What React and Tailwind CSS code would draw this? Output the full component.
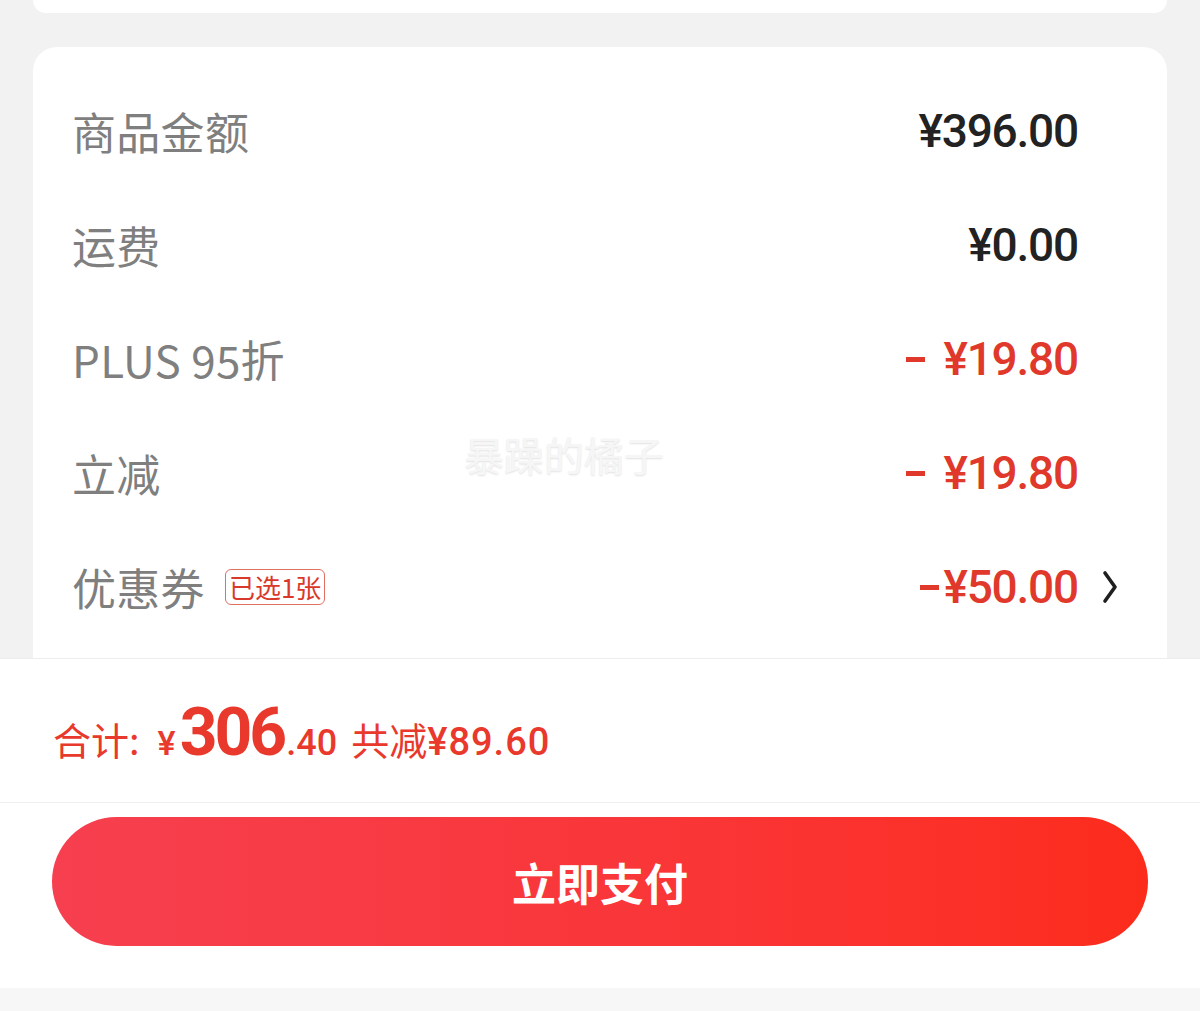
import React from "react";

const CJK = '"Noto Sans CJK SC", "Noto Sans", sans-serif';
const NUM = 'Roboto, "Noto Sans CJK SC", sans-serif';

function Chevron() {
  return (
    <svg width="16" height="34" viewBox="0 0 16 34" fill="none">
      <path d="M3 3 L13 17 L3 31" stroke="#1f1f1f" strokeWidth="3.6" strokeLinecap="round" strokeLinejoin="round" />
    </svg>
  );
}

function Row({ label, badge, value, red, dash, dashGap, chevron }) {
  return (
    <div className="flex h-[114px] items-center">
      <div className="flex items-center">
        <span className="text-[44px] leading-none tracking-[0.3px] text-[#7f7f7f]" style={{ fontFamily: CJK }}>
          {label}
        </span>
        {badge && (
          <span
            className="ml-[20px] flex h-[36px] items-center rounded-[6px] border border-[#e07060] px-[3px] text-[26px] leading-none text-[#d9392b]"
            style={{ fontFamily: CJK }}
          >
            {badge}
          </span>
        )}
      </div>
      <div className="flex-1" />
      <span
        className={`flex items-center text-[46px] font-medium leading-none tracking-[-1.2px] ${red ? "text-[#e0392b]" : "text-[#222222]"}`}
        style={{ fontFamily: NUM }}
      >
        {dash && (
          <span className={`inline-block h-[5px] w-[19px] bg-[#e0392b] ${dashGap ? "mr-[18px]" : "mr-[4px]"}`} />
        )}
        {value}
      </span>
      <div className="flex w-[40px] justify-end">{chevron && <Chevron />}</div>
    </div>
  );
}

export default function App() {
  return (
    <div className="relative flex h-[1011px] w-full flex-col overflow-hidden bg-[#f2f2f2]">
      <div className="mx-[33px] h-[13px] shrink-0 rounded-b-[24px] bg-white" />
      <div className="mx-[33px] mt-[34px] flex-1 rounded-t-[24px] bg-white pl-[39px] pr-[49px] pt-[27px]">
        <Row label="商品金额" value="¥396.00" />
        <Row label="运费" value="¥0.00" />
        <Row label="PLUS 95折" value="¥19.80" red dash dashGap />
        <Row label="立减" value="¥19.80" red dash dashGap />
        <Row label="优惠券" badge="已选1张" value="¥50.00" red dash chevron />
      </div>
      <div className="shrink-0 bg-white">
        <div className="flex h-[144px] items-center border-t border-[#ededed] pl-[53px] pt-[10px]">
          <div className="flex items-baseline text-[#e8392c]" style={{ fontFamily: NUM }}>
            <span className="text-[38px]" style={{ fontFamily: CJK }}>合计:</span>
            <span className="ml-[18px] text-[34px] font-medium">¥</span>
            <span className="ml-[4px] text-[66px] font-bold leading-none tracking-[-3px]">306</span>
            <span className="ml-[2px] text-[36px] font-medium">.40</span>
            <span className="ml-[14px] text-[38px]" style={{ fontFamily: CJK }}>共减</span>
            <span className="text-[38px] font-medium tracking-[1px]">¥89.60</span>
          </div>
        </div>
        <div className="border-t border-[#f0f0f0] px-[52px] pb-[42px] pt-[14px]">
          <div className="flex h-[129px] items-center justify-center rounded-full bg-gradient-to-r from-[#f63f4f] to-[#fc2c1b]">
            <span className="text-[44px] font-bold leading-none text-white" style={{ fontFamily: CJK }}>
              立即支付
            </span>
          </div>
        </div>
      </div>
      <div className="h-[23px] shrink-0 bg-[#f7f7f7]" />
      <div
        className="pointer-events-none absolute left-[464px] top-[434px] text-[40px] leading-none text-[#f6f6f6]"
        style={{ fontFamily: CJK, textShadow: "0 1px 2px rgba(0,0,0,0.12)" }}
      >
        暴躁的橘子
      </div>
    </div>
  );
}
